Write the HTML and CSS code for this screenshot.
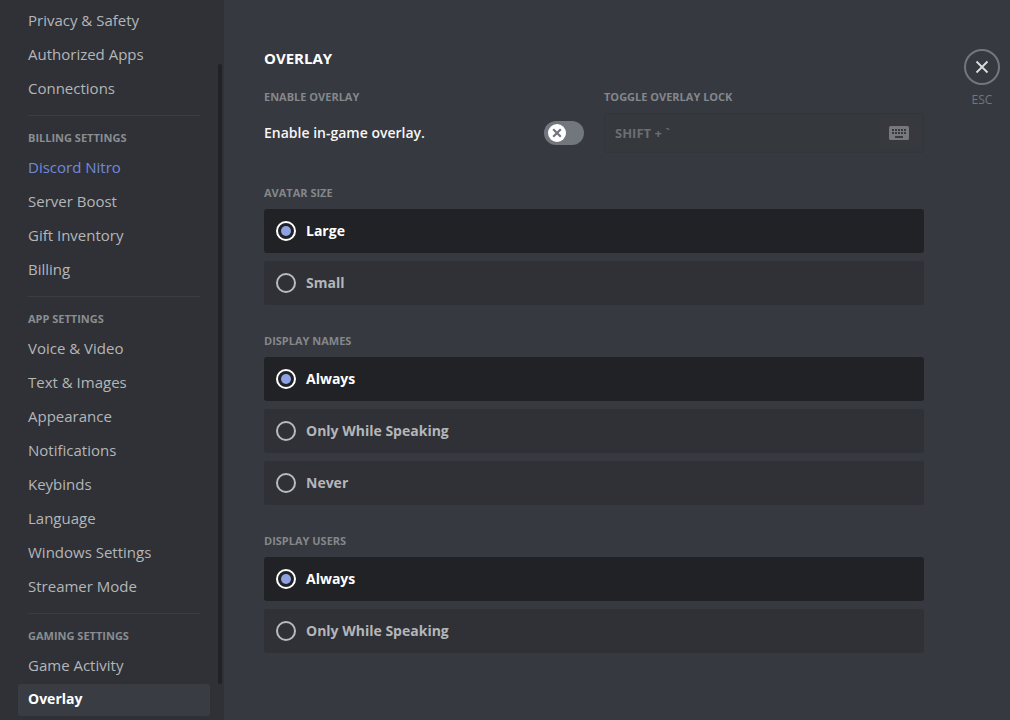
FILE: index.html
```html
<!DOCTYPE html>
<html lang="en">
<head>
<meta charset="utf-8">
<meta name="viewport" content="width=device-width, initial-scale=1">
<title>Overlay settings</title>
<link rel="stylesheet" href="styles.css">
</head>
<body>
<div class="app">
  <nav class="sidebar" aria-label="Settings">
    <a class="item" href="#privacy">Privacy &amp; Safety</a>
    <a class="item" href="#apps">Authorized Apps</a>
    <a class="item" href="#connections">Connections</a>
    <hr class="separator">
    <h2 class="nav-header">Billing Settings</h2>
    <a class="item item-brand" href="#nitro">Discord Nitro</a>
    <a class="item" href="#boost">Server Boost</a>
    <a class="item" href="#gifts">Gift Inventory</a>
    <a class="item" href="#billing">Billing</a>
    <hr class="separator">
    <h2 class="nav-header">App Settings</h2>
    <a class="item" href="#voice">Voice &amp; Video</a>
    <a class="item" href="#text">Text &amp; Images</a>
    <a class="item" href="#appearance">Appearance</a>
    <a class="item" href="#notifications">Notifications</a>
    <a class="item" href="#keybinds">Keybinds</a>
    <a class="item" href="#language">Language</a>
    <a class="item" href="#windows">Windows Settings</a>
    <a class="item" href="#streamer">Streamer Mode</a>
    <hr class="separator">
    <h2 class="nav-header">Gaming Settings</h2>
    <a class="item" href="#activity">Game Activity</a>
    <a class="item item-selected" href="#overlay" aria-current="page">Overlay</a>
    <div class="scroll-thumb"></div>
  </nav>

  <main class="main">
    <div class="content">
      <h1 class="title">Overlay</h1>
      <div class="columns">
        <section class="column">
          <h2 class="label">Enable Overlay</h2>
          <div class="switch-row">
            <label class="switch-label" for="enable">Enable in-game overlay.</label>
            <span class="switch">
              <input class="switch-input" type="checkbox" role="switch" id="enable">
              <svg class="switch-knob" width="18" height="18" viewBox="0 0 18 18" aria-hidden="true"><circle cx="9" cy="9" r="9" fill="#fff"/><path d="M5.200 5.200l7.600 7.600M12.800 5.200l-7.600 7.600" stroke="#72767d" stroke-width="2.200"/></svg>
            </span>
          </div>
        </section>
        <section class="column">
          <label class="label" for="keybind">Toggle Overlay Lock</label>
          <div class="keybind">
            <input class="keybind-input" id="keybind" type="text" value="SHIFT + `" disabled>
            <button class="keybind-button" type="button" aria-label="Record keybind" disabled>
              <svg width="20" height="14" viewBox="0 0 20 14" aria-hidden="true"><path fill="#76787c" fill-rule="evenodd" d="M1.500 0H18.500A1.500 1.500 0 0 1 20 1.500V12.500A1.500 1.500 0 0 1 18.500 14H1.500A1.500 1.500 0 0 1 0 12.500V1.500A1.500 1.500 0 0 1 1.500 0ZM3 3V5H5V3ZM6 3V5H8V3ZM9 3V5H11V3ZM12 3V5H14V3ZM15 3V5H17V3ZM3 6V8H5V6ZM6 6V8H8V6ZM9 6V8H11V6ZM12 6V8H14V6ZM15 6V8H17V6ZM6 10V12H14V10Z"/></svg>
            </button>
          </div>
        </section>
      </div>

      <fieldset class="group">
        <legend class="label">Avatar Size</legend>
        <label class="option"><input class="radio" type="radio" name="avatar" checked>Large</label>
        <label class="option"><input class="radio" type="radio" name="avatar">Small</label>
      </fieldset>
      <fieldset class="group">
        <legend class="label">Display Names</legend>
        <label class="option"><input class="radio" type="radio" name="names" checked>Always</label>
        <label class="option"><input class="radio" type="radio" name="names">Only While Speaking</label>
        <label class="option"><input class="radio" type="radio" name="names">Never</label>
      </fieldset>
      <fieldset class="group">
        <legend class="label">Display Users</legend>
        <label class="option"><input class="radio" type="radio" name="users" checked>Always</label>
        <label class="option"><input class="radio" type="radio" name="users">Only While Speaking</label>
      </fieldset>
    </div>
    <div class="close">
      <button class="close-button" type="button" aria-label="Close settings">
        <svg width="14" height="14" viewBox="0 0 14 14" aria-hidden="true"><path d="M1.500 1.500l11 11M12.500 1.500l-11 11" stroke="#dcddde" stroke-width="1.800"/></svg>
      </button>
      <span class="close-text">ESC</span>
    </div>
  </main>
</div>
</body>
</html>
```

FILE: styles.css
```css
* {
  box-sizing: border-box;
}

body {
  margin: 0;
  background: #36393f;
  color: #fff;
  font-family: "Open Sans", "Noto Sans", sans-serif;
  font-size: 15px;
  line-height: 20px;
}

.app {
  display: flex;
  min-height: 100vh;
}

.sidebar {
  position: relative;
  flex: 0 0 224px;
  padding: 5px 14px 0 18px;
  background: #2f3136;
}

.item {
  display: block;
  margin-bottom: 2px;
  padding: 5px 10px 7px;
  border-radius: 3px;
  color: #b4b6b9;
  font-weight: 500;
  text-decoration: none;
}

.item-brand {
  color: #7289da;
}

.item-selected {
  background: #393c43;
  color: #fff;
  font-size: 14px;
  font-weight: 700;
}

.separator {
  height: 1px;
  margin: 10px 10px 8px;
  border: 0;
  background: #3a3c42;
}

.nav-header {
  margin: 0;
  padding: 6px 10px;
  color: #8a8d92;
  font-size: 11px;
  font-weight: 700;
  line-height: 16px;
  text-transform: uppercase;
}

.scroll-thumb {
  position: absolute;
  top: 64px;
  right: 2px;
  width: 4px;
  height: 620px;
  border-radius: 2px;
  background: #202225;
}

.main {
  display: flex;
  flex: 1;
  gap: 40px;
  min-width: 0;
  padding: 48px 10px 40px 40px;
}

.content {
  flex: 1;
  min-width: 0;
  max-width: 660px;
}

.title {
  margin: 0 0 21px;
  font-size: 15px;
  font-weight: 700;
  line-height: 20px;
  text-transform: uppercase;
}

.columns {
  display: flex;
  gap: 20px;
  margin-bottom: 32px;
}

.column {
  flex: 1;
  min-width: 0;
}

.label {
  display: block;
  margin: 0 0 8px;
  padding: 0;
  color: #84878b;
  font-size: 11px;
  font-weight: 700;
  line-height: 16px;
  text-transform: uppercase;
}

.switch-row {
  display: flex;
  align-items: center;
  justify-content: space-between;
  height: 40px;
}

.switch-label {
  color: #f6f6f7;
  font-size: 14px;
  font-weight: 600;
}

.switch {
  position: relative;
  width: 40px;
  height: 24px;
}

.switch-input {
  display: block;
  width: 40px;
  height: 24px;
  margin: 0;
  border-radius: 12px;
  background: #72767d;
  appearance: none;
}

.switch-knob {
  position: absolute;
  top: 3px;
  left: 4px;
  pointer-events: none;
}

.keybind {
  display: flex;
  align-items: center;
  height: 40px;
  padding: 0 4px 0 10px;
  border: 1px solid #323539;
  border-radius: 3px;
  background: #35383d;
}

.keybind-input {
  flex: 1;
  min-width: 0;
  padding: 0;
  border: 0;
  background: transparent;
  color: #6c6e72;
  font: 700 13px/20px "Open Sans", "Noto Sans", sans-serif;
}

.keybind-button {
  display: flex;
  align-items: center;
  justify-content: center;
  width: 40px;
  height: 30px;
  padding: 0;
  border: 0;
  border-radius: 3px;
  background: #37393e;
}

.group {
  display: flex;
  flex-direction: column;
  gap: 8px;
  min-width: 0;
  margin: 0 0 28px;
  padding: 0;
  border: 0;
}

.option {
  display: flex;
  align-items: center;
  gap: 10px;
  height: 44px;
  padding: 0 12px;
  border-radius: 3px;
  background: #2f3136;
  color: #b4b6b9;
  font-size: 14px;
  font-weight: 700;
}

.option:has(:checked) {
  background: #202225;
  color: #fff;
}

.radio {
  width: 20px;
  height: 20px;
  margin: 0;
  padding: 3px;
  border: 2px solid #b9bbbe;
  border-radius: 50%;
  appearance: none;
}

.radio:checked {
  border-color: #fff;
  background: #8ea1e1 content-box;
}

.close {
  display: flex;
  flex-direction: column;
  align-items: center;
  gap: 7px;
  margin-left: auto;
  padding-top: 1px;
}

.close-button {
  display: flex;
  align-items: center;
  justify-content: center;
  width: 36px;
  height: 36px;
  padding: 0;
  border: 2px solid #72767d;
  border-radius: 50%;
  background: transparent;
}

.close-text {
  color: #72767d;
  font-size: 12px;
  font-weight: 500;
  line-height: 16px;
}
```
